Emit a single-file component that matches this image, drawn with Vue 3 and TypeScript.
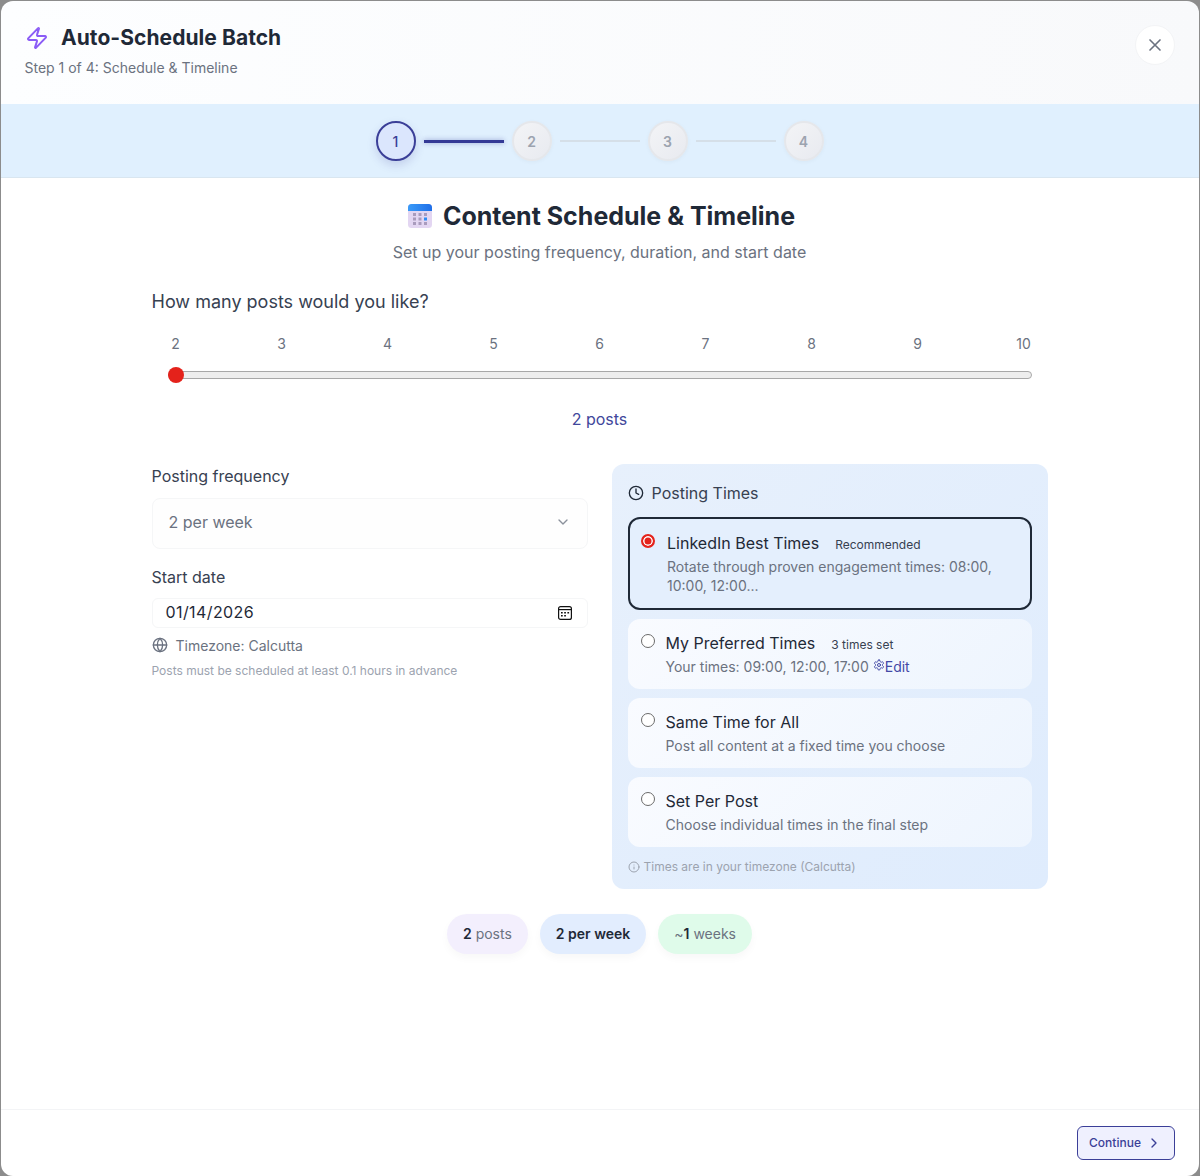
<script setup lang="ts">
const ticks: number[] = [2, 3, 4, 5, 6, 7, 8, 9, 10]
const steps: number[] = [1, 2, 3, 4]
</script>

<template>
  <div class="modal">
    <header class="head">
      <div>
        <div class="title-row">
          <svg class="zap" viewBox="0 0 24 24" fill="none" stroke="#8b5cf6" stroke-width="2" stroke-linecap="round" stroke-linejoin="round"><path d="M4 14a1 1 0 0 1-.78-1.63l9.9-10.2a.5.5 0 0 1 .86.46l-1.92 6.02A1 1 0 0 0 13 10h7a1 1 0 0 1 .78 1.63l-9.9 10.2a.5.5 0 0 1-.86-.46l1.92-6.02A1 1 0 0 0 11 14z"/></svg>
          <h1>Auto-Schedule Batch</h1>
        </div>
        <p class="step-text">Step 1 of 4: Schedule &amp; Timeline</p>
      </div>
      <button class="close" aria-label="Close">
        <svg viewBox="0 0 24 24" fill="none" stroke="#6b7280" stroke-width="2" stroke-linecap="round"><path d="M18 6 6 18M6 6l12 12"/></svg>
      </button>
    </header>

    <nav class="stepper">
      <template v-for="s in steps" :key="s">
        <div class="dot" :class="{ active: s === 1 }">{{ s }}</div>
        <div v-if="s < 4" class="line" :class="{ active: s === 1 }"></div>
      </template>
    </nav>

    <main class="body">
      <div class="heading">
        <svg class="cal" viewBox="0 0 24 24">
          <defs>
            <linearGradient id="calTop" x1="0" y1="0" x2="1" y2="0"><stop offset="0" stop-color="#3a9bf8"/><stop offset="1" stop-color="#1f6fe8"/></linearGradient>
          </defs>
          <rect x="0" y="0" width="24" height="24" rx="3.5" fill="#e3d6f2"/>
          <path d="M0 7V3.500A3.500 3.500 0 0 1 3.500 0h17A3.500 3.500 0 0 1 24 3.500V7z" fill="url(#calTop)"/>
          <g fill="#a99bbd">
            <rect x="5" y="9" width="3" height="3"/><rect x="10.500" y="9" width="3" height="3"/><rect x="16" y="9" width="3" height="3"/>
            <rect x="5" y="13.500" width="3" height="3"/><rect x="10.500" y="13.500" width="3" height="3"/>
            <rect x="5" y="18" width="3" height="3"/><rect x="10.500" y="18" width="3" height="3"/><rect x="16" y="18" width="3" height="3"/>
          </g>
          <rect x="16" y="13.500" width="3" height="3" fill="#2f8cf5"/>
        </svg>
        <h2>Content Schedule &amp; Timeline</h2>
      </div>
      <p class="sub">Set up your posting frequency, duration, and start date</p>

      <section class="content">
        <h3 class="q">How many posts would you like?</h3>
        <div class="slider">
          <div class="ticks"><span v-for="t in ticks" :key="t">{{ t }}</span></div>
          <div class="track"><span class="thumb"></span></div>
        </div>
        <p class="count">2 posts</p>

        <div class="cols">
          <div class="left">
            <label class="lbl">Posting frequency</label>
            <div class="select">
              <span>2 per week</span>
              <svg viewBox="0 0 24 24" fill="none" stroke="#8b919c" stroke-width="2" stroke-linecap="round" stroke-linejoin="round"><path d="m6 9 6 6 6-6"/></svg>
            </div>
            <label class="lbl date-lbl">Start date</label>
            <div class="date">
              <span>01/14/2026</span>
              <svg viewBox="0 0 14 14" fill="none" stroke="#111" stroke-width="1.200"><rect x=".6" y=".6" width="12.800" height="12.800" rx="2"/><path d="M.6 3.600h12.800"/><g fill="#111" stroke="none"><rect x="3" y="6" width="1.700" height="1.500"/><rect x="6.200" y="6" width="1.700" height="1.500"/><rect x="9.400" y="6" width="1.700" height="1.500"/><rect x="3" y="9" width="1.700" height="1.500"/><rect x="6.200" y="9" width="1.700" height="1.500"/></g></svg>
            </div>
            <div class="tz">
              <svg viewBox="0 0 24 24" fill="none" stroke="#6b7280" stroke-width="2" stroke-linecap="round" stroke-linejoin="round"><circle cx="12" cy="12" r="10"/><path d="M12 2a14.500 14.500 0 0 0 0 20 14.500 14.500 0 0 0 0-20"/><path d="M2 12h20"/></svg>
              <span>Timezone: Calcutta</span>
            </div>
            <p class="adv">Posts must be scheduled at least 0.1 hours in advance</p>
          </div>

          <aside class="panel">
            <div class="panel-title">
              <svg viewBox="0 0 24 24" fill="none" stroke="#1f2937" stroke-width="2" stroke-linecap="round" stroke-linejoin="round"><circle cx="12" cy="12" r="10"/><path d="M12 6v6l4 2"/></svg>
              <span>Posting Times</span>
            </div>

            <div class="opt sel">
              <span class="radio on"></span>
              <div>
                <div class="opt-title">LinkedIn Best Times<small>Recommended</small></div>
                <p class="opt-desc">Rotate through proven engagement times: 08:00, 10:00, 12:00...</p>
              </div>
            </div>
            <div class="opt">
              <span class="radio"></span>
              <div>
                <div class="opt-title">My Preferred Times<small>3 times set</small></div>
                <p class="opt-desc">Your times: 09:00, 12:00, 17:00 <a class="edit"><svg viewBox="0 0 24 24" fill="none" stroke="currentColor" stroke-width="2" stroke-linecap="round" stroke-linejoin="round"><path d="M12.220 2h-.44a2 2 0 0 0-2 2v.18a2 2 0 0 1-1 1.730l-.43.25a2 2 0 0 1-2 0l-.15-.08a2 2 0 0 0-2.730.73l-.22.38a2 2 0 0 0 .73 2.730l.15.1a2 2 0 0 1 1 1.720v.51a2 2 0 0 1-1 1.740l-.15.09a2 2 0 0 0-.73 2.730l.22.38a2 2 0 0 0 2.730.73l.15-.08a2 2 0 0 1 2 0l.43.25a2 2 0 0 1 1 1.730V20a2 2 0 0 0 2 2h.44a2 2 0 0 0 2-2v-.18a2 2 0 0 1 1-1.730l.43-.25a2 2 0 0 1 2 0l.15.08a2 2 0 0 0 2.730-.73l.22-.39a2 2 0 0 0-.73-2.730l-.15-.08a2 2 0 0 1-1-1.740v-.5a2 2 0 0 1 1-1.740l.15-.09a2 2 0 0 0 .73-2.730l-.22-.38a2 2 0 0 0-2.730-.73l-.15.08a2 2 0 0 1-2 0l-.43-.25a2 2 0 0 1-1-1.730V4a2 2 0 0 0-2-2z"/><circle cx="12" cy="12" r="3"/></svg>Edit</a></p>
              </div>
            </div>
            <div class="opt">
              <span class="radio"></span>
              <div>
                <div class="opt-title">Same Time for All</div>
                <p class="opt-desc">Post all content at a fixed time you choose</p>
              </div>
            </div>
            <div class="opt last">
              <span class="radio"></span>
              <div>
                <div class="opt-title">Set Per Post</div>
                <p class="opt-desc">Choose individual times in the final step</p>
              </div>
            </div>

            <div class="panel-note">
              <svg viewBox="0 0 24 24" fill="none" stroke="#9ca3af" stroke-width="2" stroke-linecap="round" stroke-linejoin="round"><circle cx="12" cy="12" r="10"/><path d="M12 16v-4M12 8h.01"/></svg>
              <span>Times are in your timezone (Calcutta)</span>
            </div>
          </aside>
        </div>

        <div class="pills">
          <div class="pill purple"><b>2</b> posts</div>
          <div class="pill blue"><b>2 per week</b></div>
          <div class="pill green">~<b>1</b> weeks</div>
        </div>
      </section>
    </main>

    <footer class="foot">
      <button class="next">Continue
        <svg viewBox="0 0 24 24" fill="none" stroke="currentColor" stroke-width="2" stroke-linecap="round" stroke-linejoin="round"><path d="m9 18 6-6-6-6"/></svg>
      </button>
    </footer>
  </div>
</template>

<style>
html, body { margin: 0; background: #8c8c8c; }
</style>

<style scoped>
* { box-sizing: border-box; }
.modal {
  height: 1176px; width: 1200px; padding: 1px 1px 0; overflow: hidden;
  font-family: Inter, "Liberation Sans", sans-serif; color: #1f2937;
  display: flex; flex-direction: column;
}
.modal > * { background: #fff; }
.head {
  height: 103px; padding: 25px 24px 0 23.5px; display: flex; justify-content: space-between; align-items: flex-start;
  background: linear-gradient(90deg, #fdfeff, #f8f9fb); border-radius: 12px 12px 0 0;
}
.title-row { display: flex; align-items: center; gap: 12.500px; height: 24px; }
.zap { width: 24px; height: 24px; }
h1 { margin: 0; font-size: 21px; font-weight: 700; line-height: 24px; letter-spacing: 0.06px; color: #1f2937; }
.step-text { margin: 8px 0 0; font-size: 14px; line-height: 20px; color: #6b7280; }
.close {
  width: 40px; height: 40px; margin-top: -1px; border-radius: 50%; border: 1px solid #f3f4f6; background: #fff; padding: 0;
  display: flex; align-items: center; justify-content: center;
}
.close svg { width: 20px; height: 20px; }

.stepper {
  background: #e0f0fe !important; height: 74px; border-bottom: 1px solid #d9e6f0;
  display: flex; align-items: center; justify-content: center; gap: 8px; padding: 1px 1px 0 0;
}
.dot {
  width: 40px; height: 40px; border-radius: 50%; display: flex; align-items: center; justify-content: center;
  font-size: 14px; font-weight: 600; color: #9ca3af;
  background: linear-gradient(135deg, #f3f4f6, #e8eaf0); border: 2px solid #e5e7eb;
  box-shadow: 0 1px 4px rgba(0,0,0,.04);
}
.dot.active { background: #dbe6fd; border-color: #3b3f98; color: #3b3f98; font-weight: 500; box-shadow: 0 4px 10px rgba(59,63,152,.18); }
.line { width: 80px; height: 2px; background: #d5dfe8; }
.line.active { height: 3px; background: #343a96; box-shadow: 0 0 5px rgba(52,58,150,.45); }

.body { flex: 1; padding: 22px 1px 0 0; }
.heading { display: flex; align-items: center; justify-content: center; gap: 11px; height: 32px; padding-left: 4px; }
.cal { width: 24px; height: 24px; margin-top: -1px; }
h2 { margin: 0; font-size: 25px; font-weight: 700; line-height: 32px; color: #1f2937; }
.sub { margin: 8px 0 0; text-align: center; font-size: 16px; line-height: 24px; color: #6b7280; }

.content { width: 896px; margin: 24px auto 0; padding: 0; }
.q { margin: 0; font-size: 18px; font-weight: 400; line-height: 28px; color: #374151; }
.slider { padding: 0 16px; margin-top: 17.500px; }
.ticks { display: flex; justify-content: space-between; font-size: 14px; line-height: 20px; color: #6b7280; }
.ticks span { width: 16px; text-align: center; }
.track {
  position: relative; height: 8px; margin-top: 17.500px; border-radius: 4px;
  background: #eeeeee; border: 1px solid #a8a8a8;
}
.thumb { position: absolute; left: -1px; top: -5px; width: 16px; height: 16px; border-radius: 50%; background: #e4221b; }
.count { margin: 28px 0 0; text-align: center; font-size: 16px; line-height: 24px; color: #41479b; }

.cols { display: grid; grid-template-columns: 436px 436px; gap: 24px; margin-top: 33px; }
.left { padding-top: 0; }
.lbl { display: block; font-size: 16px; font-weight: 400; line-height: 24px; color: #374151; }
.select {
  margin-top: 10px; height: 51px; padding: 0 16px 3px; display: flex; align-items: center; justify-content: space-between;
  border: 1px solid #f5f6f7; border-radius: 8px; background: #fefefe; font-size: 16px; color: #6b7280;
}
.select svg { width: 16px; height: 16px; }
.date-lbl { margin-top: 16px; }
.date {
  display: flex; align-items: center; justify-content: space-between; height: 30px; margin-top: 9px; padding: 0 15px 2px 13px;
  border: 1px solid #f5f6f7; border-radius: 6px; background: #fff;
  font-size: 16px; letter-spacing: 0.4px; color: #1f2937;
}
.date svg { width: 14px; height: 14px; margin-top: 2px; }
.tz { display: flex; align-items: center; gap: 8px; margin-top: 7px; height: 20px; font-size: 14px; color: #6b7280; }
.tz svg { width: 16px; height: 16px; }
.adv { margin: 8px 0 0; font-size: 12px; line-height: 16px; color: #9ca3af; }

.panel {
  height: 425px; border-radius: 12px; padding: 16px 16px 0;
  background: linear-gradient(135deg, #e7f0fc, #dfecfd);
  display: flex; flex-direction: column;
}
.panel-title { flex: none; display: flex; align-items: center; gap: 8px; height: 24px; margin: 1px 0 12px; font-size: 16px; font-weight: 400; color: #374151; }
.panel-title svg { width: 16px; height: 16px; }
.opt {
  flex: none; display: flex; gap: 11px; height: 69.500px; padding: 12px 12px 0 13px; margin-bottom: 9.500px; border-radius: 12px;
  background: linear-gradient(135deg, #f9fbff, #eef5fe);
}
.opt.last { height: 70px; }
.opt.sel { height: 93px; border: 2px solid #1f2937; background: #e4effd; margin-bottom: 9px; padding: 12px 11px 0 11.500px; gap: 12px; }
.radio {
  flex: none; width: 14px; height: 14px; margin-top: 3px; border-radius: 50%; border: 1px solid #6b6b6b; background: #fff;
}
.radio.on { border: 2px solid #e4221b; box-shadow: inset 0 0 0 1.500px #fff; background: #e4221b; margin-top: 3px; }
.opt-title { height: 26px; font-size: 16px; line-height: 24px; color: #1f2937; }
.opt-title small { margin-left: 16px; font-size: 12px; color: #374151; }
.opt-desc { margin: 0; font-size: 14px; line-height: 19px; color: #6b7280; }
.edit { color: #4349a6; }
.edit svg { width: 12px; height: 12px; vertical-align: 1px; }
.panel-note { flex: none; display: flex; align-items: center; gap: 4px; font-size: 12px; line-height: 16px; color: #9ca3af; margin-top: 2.500px; }
.panel-note svg { width: 12px; height: 12px; }

.pills { display: flex; justify-content: center; gap: 12px; margin-top: 25px; }
.pill { height: 40px; padding: 0 16px 1px; display: flex; align-items: center; white-space: pre; font-size: 14px; color: #6b7280; border-radius: 20px; box-shadow: 0 4px 8px rgba(0,0,0,.03); }
.pill b { font-weight: 600; color: #1f2937; }
.purple { background: #f3effd; }
.blue { background: #e2edfe; }
.green { background: #dffbea; }

.foot {
  height: 67px; border-top: 1px solid #f3f4f6; padding-right: 24px;
  display: flex; align-items: center; justify-content: flex-end; border-radius: 0 0 12px 12px;
}
.next {
  width: 98px; height: 34px; display: flex; align-items: center; justify-content: center; gap: 5px; padding: 0 1px 1px 0;
  border: 1px solid #3b3f98; border-radius: 6px; background: #eff0fe; color: #3b3f98;
  font-family: Inter, sans-serif; font-size: 12px; font-weight: 500;
}
.next svg { width: 16px; height: 16px; }
</style>
